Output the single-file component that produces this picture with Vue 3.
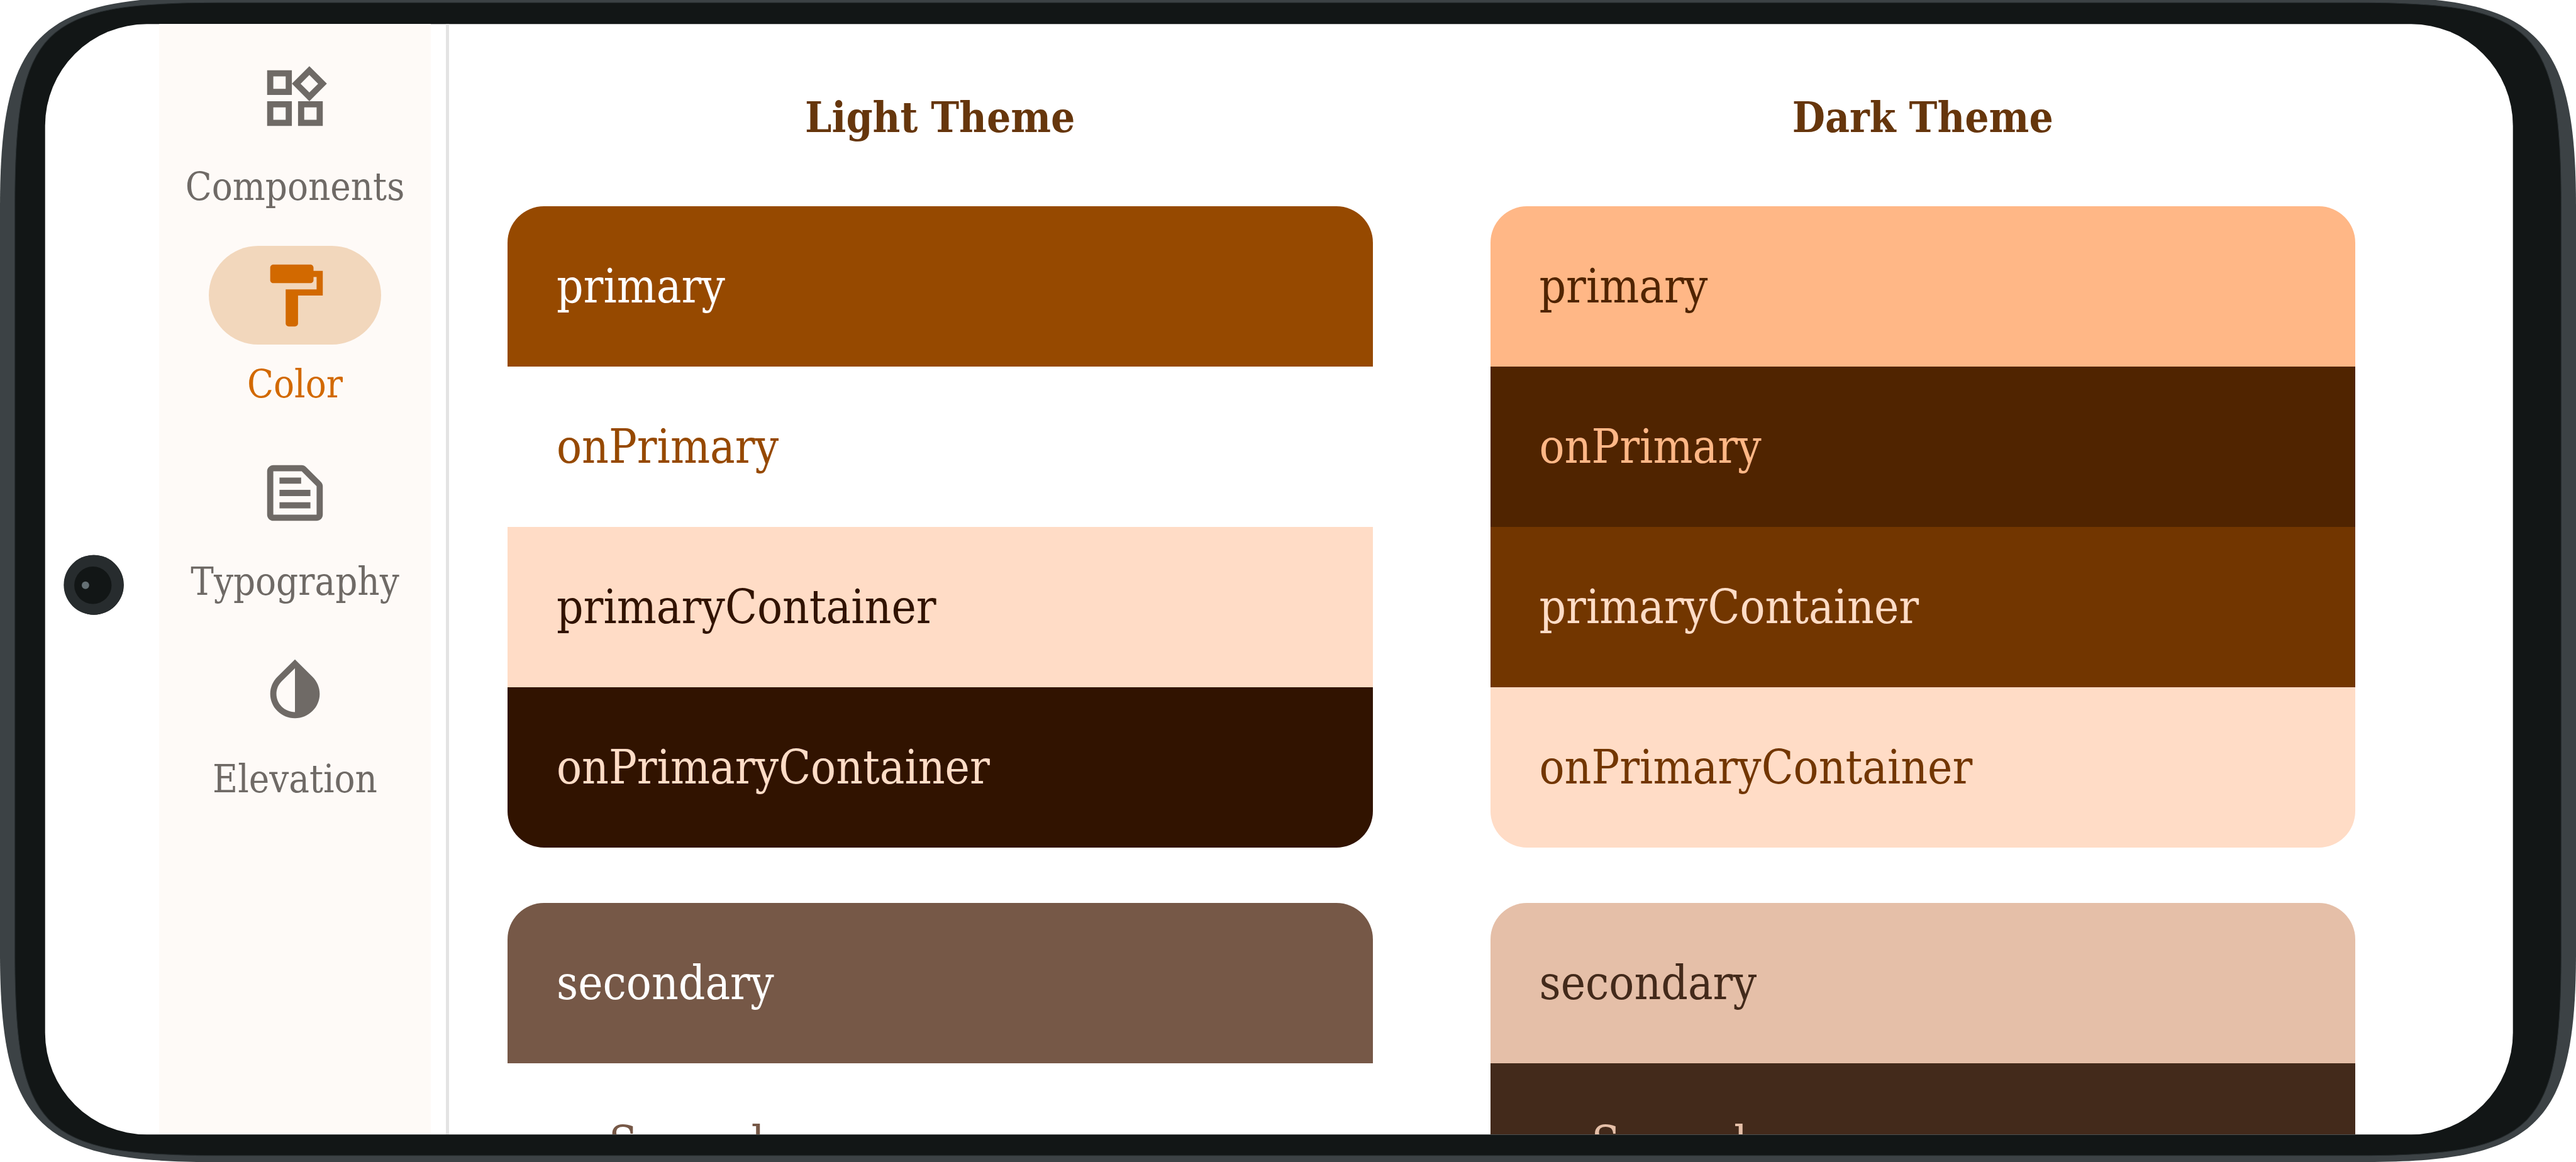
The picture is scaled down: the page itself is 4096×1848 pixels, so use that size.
<script setup>
import { ref } from 'vue'

const active = ref('Color')

const destinations = [
  {
    label: 'Components',
    path: 'M16.66 4.52l2.83 2.83-2.83 2.83-2.83-2.83 2.83-2.83M9 5v4H5V5h4m10 10v4h-4v-4h4M9 15v4H5v-4h4m7.66-13.31L11 7.34 16.66 13l5.66-5.66-5.66-5.65zM11 3H3v8h8V3zm10 10h-8v8h8v-8zm-10 0H3v8h8v-8z'
  },
  {
    label: 'Color',
    path: 'M18 4V3c0-.55-.45-1-1-1H5c-.55 0-1 .45-1 1v4c0 .55.45 1 1 1h12c.55 0 1-.45 1-1V6h1v4H9v11c0 .55.45 1 1 1h2c.55 0 1-.45 1-1v-9h8V4h-3z'
  },
  {
    label: 'Typography',
    path: 'M14.17 5L19 9.83V19H5V5h9.17m0-2H5c-1.1 0-2 .9-2 2v14c0 1.1.9 2 2 2h14c1.1 0 2-.9 2-2V9.83c0-.53-.21-1.04-.59-1.41l-4.83-4.83c-.37-.38-.88-.59-1.41-.59zM7 15h10v2H7v-2zm0-4h10v2H7v-2zm0-4h7v2H7V7z'
  },
  {
    label: 'Elevation',
    path: 'M12 4.81V19c-3.31 0-6-2.63-6-5.87 0-1.56.62-3.03 1.75-4.14L12 4.81M12 2L6.35 7.56C4.9 8.99 4 10.96 4 13.13 4 17.48 7.58 21 12 21s8-3.52 8-7.87c0-2.17-.9-4.14-2.35-5.57L12 2z'
  }
]

const themes = [
  {
    title: 'Light Theme',
    groups: [
      [
        { name: 'primary', bg: '#964900', fg: '#ffffff' },
        { name: 'onPrimary', bg: '#ffffff', fg: '#964900' },
        { name: 'primaryContainer', bg: '#ffdcc6', fg: '#311300' },
        { name: 'onPrimaryContainer', bg: '#311300', fg: '#ffdcc6' }
      ],
      [
        { name: 'secondary', bg: '#765847', fg: '#ffffff' },
        { name: 'onSecondary', bg: '#ffffff', fg: '#765847' }
      ]
    ]
  },
  {
    title: 'Dark Theme',
    groups: [
      [
        { name: 'primary', bg: '#ffb786', fg: '#502400' },
        { name: 'onPrimary', bg: '#502400', fg: '#ffb786' },
        { name: 'primaryContainer', bg: '#723600', fg: '#ffdcc6' },
        { name: 'onPrimaryContainer', bg: '#ffdcc6', fg: '#723600' }
      ],
      [
        { name: 'secondary', bg: '#e5bfa8', fg: '#432a1b' },
        { name: 'onSecondary', bg: '#432a1b', fg: '#e5bfa8' }
      ]
    ]
  }
]
</script>

<template>
  <div class="device">
    <svg class="bezel" viewBox="0 0 7596 3427" preserveAspectRatio="none" aria-hidden="true">
      <path
        fill="#3c4245"
        d="M0 611C0 104 113 -9 620 -9H6976C7483 -9 7596 104 7596 611V2807C7596 3314 7483 3427 6976 3427H620C113 3427 0 3314 0 2807Z"
      />
      <path
        fill="#121616"
        stroke="#262c2e"
        stroke-width="2"
        d="M44 608C44 83 119 8 644 8H6952C7477 8 7552 83 7552 608V2808C7552 3333 7477 3408 6952 3408H644C119 3408 44 3333 44 2808Z"
      />
      <rect x="133" y="71" width="7277" height="3275" rx="300" fill="#ffffff" />
      <circle cx="277" cy="1725" r="88" fill="#121616" />
      <circle cx="276" cy="1725" r="88" fill="#272c2e" />
      <circle cx="274" cy="1726" r="55" fill="#121616" />
      <circle cx="252" cy="1726" r="11" fill="#657074" />
    </svg>

    <div class="screen">
      <nav class="rail" aria-label="Sections">
        <button
          v-for="item in destinations"
          :key="item.label"
          type="button"
          class="destination"
          :class="{ active: item.label === active }"
          @click="active = item.label"
        >
          <span class="indicator">
            <svg class="icon" viewBox="0 0 24 24" aria-hidden="true"><path :d="item.path" /></svg>
          </span>
          <span class="label">{{ item.label }}</span>
        </button>
      </nav>

      <main class="palettes">
        <section v-for="theme in themes" :key="theme.title" class="palette">
          <h2 class="title">{{ theme.title }}</h2>
          <ul v-for="(group, index) in theme.groups" :key="index" class="group">
            <li
              v-for="color in group"
              :key="color.name"
              class="swatch"
              :style="{ backgroundColor: color.bg, color: color.fg }"
            >
              {{ color.name }}
            </li>
          </ul>
        </section>
      </main>
    </div>
  </div>
</template>

<style>
html,
body {
  margin: 0;
  background: #ffffff;
}
</style>

<style scoped>
.device {
  display: grid;
  grid-template: 100vh / 100%;
  overflow: hidden;
  font-family: 'DejaVu Serif Condensed', 'DejaVu Serif', serif;
}

.bezel {
  grid-area: 1 / 1;
  width: 100%;
  height: 100%;
}

.screen {
  grid-area: 1 / 1;
  display: flex;
  margin: 38px 101px 44px 72px;
  overflow: hidden;
  border-radius: 162px;
}

.rail {
  display: flex;
  flex: none;
  flex-direction: column;
  gap: 44px;
  width: 432px;
  margin-left: 181px;
  padding-top: 39px;
  background: #fefaf7;
}

.destination {
  display: flex;
  flex-direction: column;
  align-items: center;
  gap: 13px;
  padding: 0;
  border: 0;
  background: none;
  color: #6f6a66;
  font-family: inherit;
  cursor: pointer;
}

.indicator {
  display: flex;
  align-items: center;
  justify-content: center;
  width: 274px;
  height: 157px;
  border-radius: 79px;
}

.icon {
  width: 118px;
  height: 118px;
  fill: currentColor;
}

.label {
  font-size: 61px;
  line-height: 100px;
}

.active {
  color: #d26900;
}

.active .indicator {
  background: #f2d7bc;
}

.palettes {
  display: grid;
  flex: 1;
  grid-template-columns: 1fr 1fr;
  gap: 187px;
  margin-left: 24px;
  padding: 101px 250px 0 93px;
  border-left: 5px solid #e3e3e3;
}

.title {
  margin: 0 0 93px;
  color: #66360c;
  font-size: 67px;
  font-weight: 700;
  line-height: 96px;
  text-align: center;
}

.group {
  margin: 0 0 88px;
  padding: 0;
  overflow: hidden;
  border-radius: 58px;
  list-style: none;
}

.swatch {
  height: 255px;
  padding: 0 78px;
  font-size: 74px;
  line-height: 255px;
}
</style>
